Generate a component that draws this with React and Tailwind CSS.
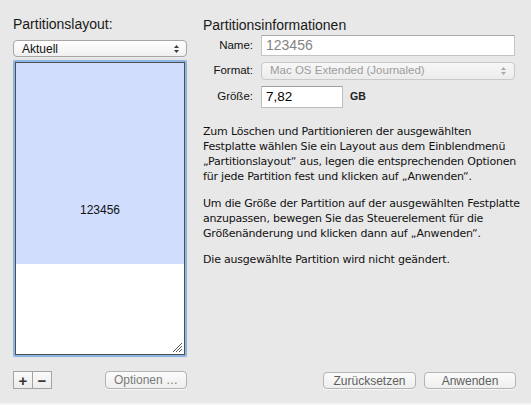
const font = { fontFamily: '"Liberation Sans", Arial, sans-serif' };
const bodyFont = { fontFamily: '"DejaVu Sans", Verdana, sans-serif' };

function Arrows({ color = '#3a3a3a' }) {
  return (
    <svg width="7" height="10" viewBox="0 0 7 10" className="shrink-0">
      <path d="M3.5 1 L6 4 L1 4 Z" fill={color} />
      <path d="M3.5 9 L6 6 L1 6 Z" fill={color} />
    </svg>
  );
}

function Button({ children, className = '' }) {
  return (
    <div
      className={`flex items-center justify-center rounded-[4px] border border-[#b4b4b4] bg-gradient-to-b from-[#fbfbfb] to-[#eeeeee] text-[12px] text-[#5e5e5e] shadow-[0_1px_0_rgba(255,255,255,0.6)] ${className}`}
    >
      {children}
    </div>
  );
}

function ResizeGrip() {
  return (
    <svg width="11" height="11" viewBox="0 0 11 11" className="absolute bottom-[1px] right-[1px]">
      <path d="M1 10 L10 1 M4 10 L10 4 M7 10 L10 7" stroke="#555" strokeWidth="1" />
    </svg>
  );
}

export default function App() {
  return (
    <div className="flex h-[405px] w-[531px] flex-col bg-[#e8e8e8] text-[#111]" style={font}>
      <div className="flex pl-[13px]">
        {/* Partitionslayout */}
        <div className="flex w-[174px] flex-col">
          <div className="mt-[16px] h-[16px] text-[14px] leading-[16px] text-[#1a1a1a]">Partitionslayout:</div>
          <div className="mt-[8px] flex h-[17px] items-center justify-between rounded-[4px] border border-[#a6a6a6] bg-gradient-to-b from-white to-[#f0f0f0] pl-[8px] pr-[6px] text-[12px] leading-none">
            <span>Aktuell</span>
            <Arrows />
          </div>
          <div className="mt-[3px] h-[297px] rounded-[2px] border-[2px] border-[#8eb6e3] shadow-[0_0_1px_#a9c6ea]">
            <div className="relative flex h-full flex-col border border-[#4f4f4f] bg-white">
              <div className="flex h-[201px] items-end justify-center bg-[#d0ddfd] pb-[48px] text-[12px] leading-none">
                123456
              </div>
              <ResizeGrip />
            </div>
          </div>
        </div>

        {/* Partitionsinformationen */}
        <div className="ml-[16px] flex w-[313px] flex-col">
          <div className="mt-[17px] h-[16px] text-[14px] leading-[16px] text-[#1a1a1a]">Partitionsinformationen</div>

          <div className="mt-[2px] flex items-center">
            <span className="w-[50px] text-right text-[11.5px]">Name:</span>
            <div className="ml-[8px] flex h-[21px] w-[254px] items-center border border-[#c4c4c4] border-t-[#a9a9a9] bg-white pl-[4px] text-[14px] text-[#838383]">
              123456
            </div>
          </div>

          <div className="mt-[6px] flex items-center">
            <span className="w-[50px] text-right text-[11.5px]">Format:</span>
            <div className="ml-[8px] flex h-[18px] w-[254px] items-center justify-between rounded-[4px] border border-[#c9c9c9] bg-gradient-to-b from-[#f7f7f7] to-[#ececec] pl-[8px] pr-[7px] text-[11.5px] text-[#9c9c9c]">
              <span>Mac OS Extended (Journaled)</span>
              <Arrows color="#a8a8a8" />
            </div>
          </div>

          <div className="mt-[6px] flex items-center">
            <span className="w-[50px] text-right text-[11.5px]">Größe:</span>
            <div className="ml-[8px] flex h-[22px] w-[82px] items-center border border-[#bdbdbd] border-t-[#9e9e9e] bg-white pl-[4px] text-[13.5px] text-black">
              7,82
            </div>
            <span className="ml-[7px] text-[10.5px] font-semibold text-[#222]">GB</span>
          </div>

          <div className="mt-[16px] whitespace-nowrap text-[11px] leading-[15px] tracking-[-0.2px] text-[#111]" style={bodyFont}>
            <p>
              Zum Löschen und Partitionieren der ausgewählten
              <br />
              Festplatte wählen Sie ein Layout aus dem Einblendmenü
              <br />
              „Partitionslayout“ aus, legen die entsprechenden Optionen
              <br />
              für jede Partition fest und klicken auf „Anwenden“.
            </p>
            <p className="mt-[12px]">
              Um die Größe der Partition auf der ausgewählten Festplatte
              <br />
              anzupassen, bewegen Sie das Steuerelement für die
              <br />
              Größenänderung und klicken dann auf „Anwenden“.
            </p>
            <p className="mt-[11px]">Die ausgewählte Partition wird nicht geändert.</p>
          </div>
        </div>
      </div>

      {/* bottom buttons */}
      <div className="mt-[14px] flex items-start pl-[13px] pr-[15px]">
        <div className="flex h-[18px] w-[39px] border border-[#a3a3a3] bg-gradient-to-b from-[#fafafa] to-[#ececec]">
          <div className="flex flex-1 items-center justify-center border-r border-[#a3a3a3] text-[15px] font-bold leading-none text-[#333]">+</div>
          <div className="flex flex-1 items-center justify-center text-[15px] font-bold leading-none text-[#333]">−</div>
        </div>
        <Button className="ml-[53px] h-[18px] w-[82px] text-[#7a7a7a]">Optionen …</Button>
        <Button className="ml-auto mt-[1px] h-[17px] w-[93px]">Zurücksetzen</Button>
        <Button className="ml-[8px] mt-[1px] h-[17px] w-[92px]">Anwenden</Button>
      </div>

      <div className="mt-auto h-[2px] bg-[#f5f5f5]" />
    </div>
  );
}
